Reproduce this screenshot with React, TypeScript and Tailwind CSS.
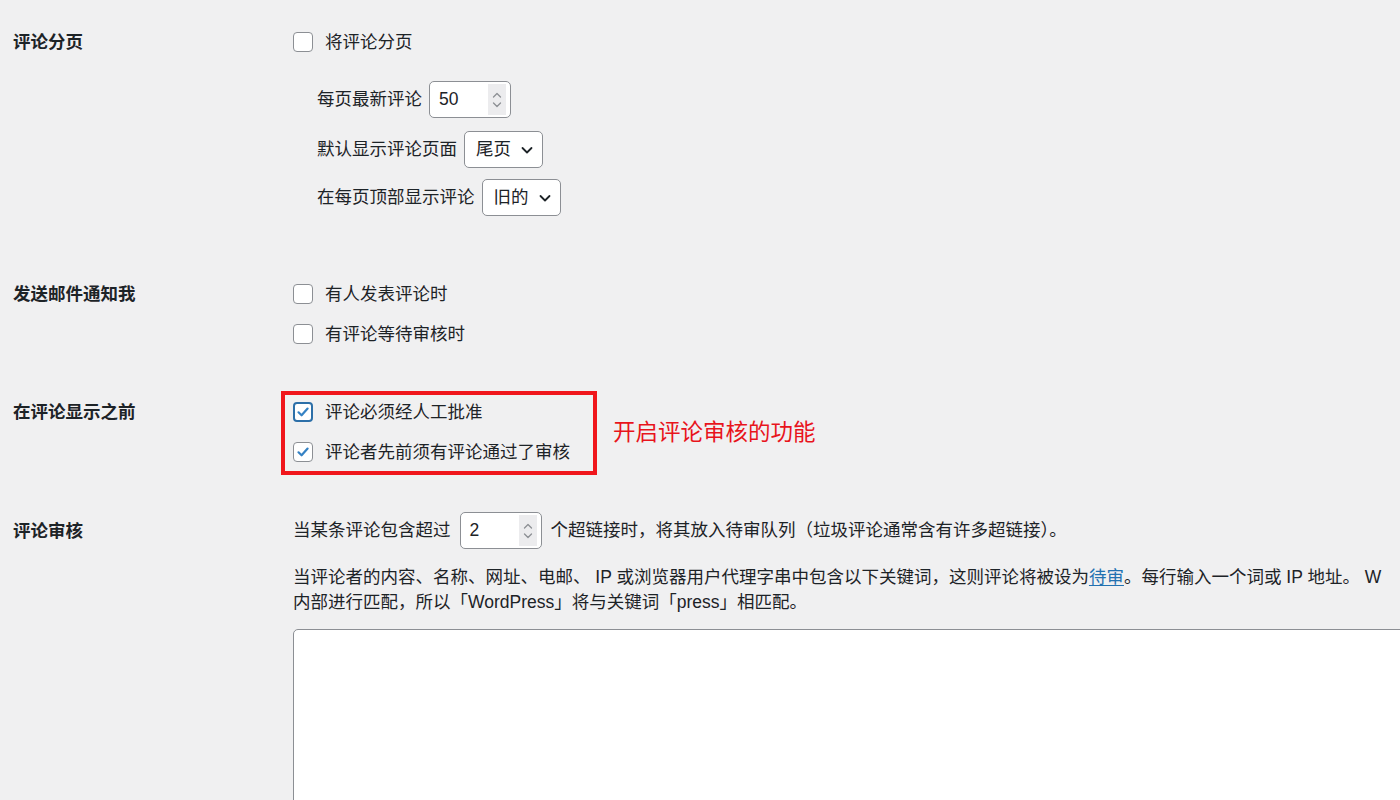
import type { JSX, ReactNode } from "react";

const FONT = { fontFamily: '"Liberation Sans", "Noto Sans CJK SC", sans-serif' };

function Box({ checked = false, focused = false }: { checked?: boolean; focused?: boolean }): JSX.Element {
  return (
    <span
      className={
        "flex h-[20px] w-[20px] shrink-0 items-center justify-center rounded-[4px] bg-white " +
        (focused ? "border-2 border-[#2c6fa8]" : "border border-[#8c8f94]")
      }
    >
      {checked && (
        <svg width="16" height="16" viewBox="0 0 16 16" fill="none">
          <path d="M3.5 8.3 L6.6 11.3 L12.6 4.6" stroke="#3582c4" strokeWidth="2.2" strokeLinecap="round" strokeLinejoin="round" />
        </svg>
      )}
    </span>
  );
}

function Check({ label, checked, focused }: { label: string; checked?: boolean; focused?: boolean }): JSX.Element {
  return (
    <label className="flex h-[28px] items-center gap-[12px]">
      <Box checked={checked} focused={focused} />
      <span>{label}</span>
    </label>
  );
}

function NumberBox({ value }: { value: string }): JSX.Element {
  return (
    <span className="flex h-[37px] w-[82px] items-center justify-between rounded-[5px] border border-[#8c8f94] bg-white pl-[9px] pr-[4px]">
      <span>{value}</span>
      <span className="flex h-[31px] w-[18px] items-center justify-center bg-[#ececee]">
        <svg width="12" height="22" viewBox="0 0 12 22" fill="none">
          <path d="M2.5 8 L6 4.5 L9.5 8" stroke="#8c8f94" strokeWidth="1.3" strokeLinecap="round" strokeLinejoin="round" />
          <path d="M2.5 14 L6 17.5 L9.5 14" stroke="#8c8f94" strokeWidth="1.3" strokeLinecap="round" strokeLinejoin="round" />
        </svg>
      </span>
    </span>
  );
}

function SelectBox({ value }: { value: string }): JSX.Element {
  return (
    <span className="flex h-[37px] items-center gap-[9px] rounded-[5px] border border-[#8c8f94] bg-white pl-[11px] pr-[8px]">
      <span>{value}</span>
      <svg width="14" height="14" viewBox="0 0 14 14" fill="none">
        <path d="M2.5 5 L7 9.5 L11.5 5" stroke="#1d2327" strokeWidth="1.8" strokeLinecap="round" strokeLinejoin="round" />
      </svg>
    </span>
  );
}

function Row({ label, children, labelTop, className = "" }: { label: string; children: ReactNode; labelTop: number; className?: string }): JSX.Element {
  return (
    <div className={"flex " + className}>
      <div className="w-[293px] shrink-0 pl-[13px] font-semibold" style={{ paddingTop: labelTop }}>
        <div className="flex h-[28px] items-center">{label}</div>
      </div>
      <div className="min-w-0 flex-1">{children}</div>
    </div>
  );
}

export default function App(): JSX.Element {
  return (
    <div className="h-[800px] w-[1400px] overflow-hidden bg-[#f0f0f1] text-[17.5px] leading-[25px] text-[#1d2327]" style={FONT}>
      {/* 评论分页 */}
      <Row label="评论分页" labelTop={0} className="pt-[28px]">
        <Check label="将评论分页" />
        <div className="pl-[24px]">
          <div className="mt-[25px] flex items-center gap-[7px]">
            <span>每页最新评论</span>
            <NumberBox value="50" />
          </div>
          <div className="mt-[13px] flex items-center gap-[7px]">
            <span>默认显示评论页面</span>
            <SelectBox value="尾页" />
          </div>
          <div className="mt-[11px] flex items-center gap-[7px]">
            <span>在每页顶部显示评论</span>
            <SelectBox value="旧的" />
          </div>
        </div>
      </Row>

      {/* 发送邮件通知我 */}
      <Row label="发送邮件通知我" labelTop={0} className="pt-[64px]">
        <Check label="有人发表评论时" />
        <div className="mt-[12px]">
          <Check label="有评论等待审核时" />
        </div>
      </Row>

      {/* 在评论显示之前 */}
      <div className="flex pt-[43px]">
        <div className="w-[281px] shrink-0 pl-[13px] pt-[7px] font-semibold">
          <div className="flex h-[28px] items-center">在评论显示之前</div>
        </div>
        <div className="flex items-center gap-[16px]">
          <div className="w-[316px] border-4 border-[#f0161c] pb-[5px] pl-[8px] pt-[3px]">
            <Check label="评论必须经人工批准" checked focused />
            <div className="mt-[12px]">
              <Check label="评论者先前须有评论通过了审核" checked />
            </div>
          </div>
          <span className="text-[22.5px] leading-[30px] text-[#e8141c]">开启评论审核的功能</span>
        </div>
      </div>

      {/* 评论审核 */}
      <Row label="评论审核" labelTop={5} className="pt-[37px]">
        <div className="flex items-center gap-[9px]">
          <span>当某条评论包含超过</span>
          <NumberBox value="2" />
          <span>个超链接时，将其放入待审队列（垃圾评论通常含有许多超链接）。</span>
        </div>
        <p className="mt-[16px] whitespace-nowrap">
          当评论者的内容、名称、网址、电邮、 IP 或浏览器用户代理字串中包含以下关键词，这则评论将被设为
          <a className="text-[#2271b1] underline underline-offset-2">待审</a>
          。每行输入一个词或 IP 地址。 W
          <br />
          内部进行匹配，所以「WordPress」将与关键词「press」相匹配。
        </p>
        <div className="mt-[14px] h-[260px] w-[1300px] rounded-[5px] border border-[#8c8f94] bg-white" />
      </Row>
    </div>
  );
}
